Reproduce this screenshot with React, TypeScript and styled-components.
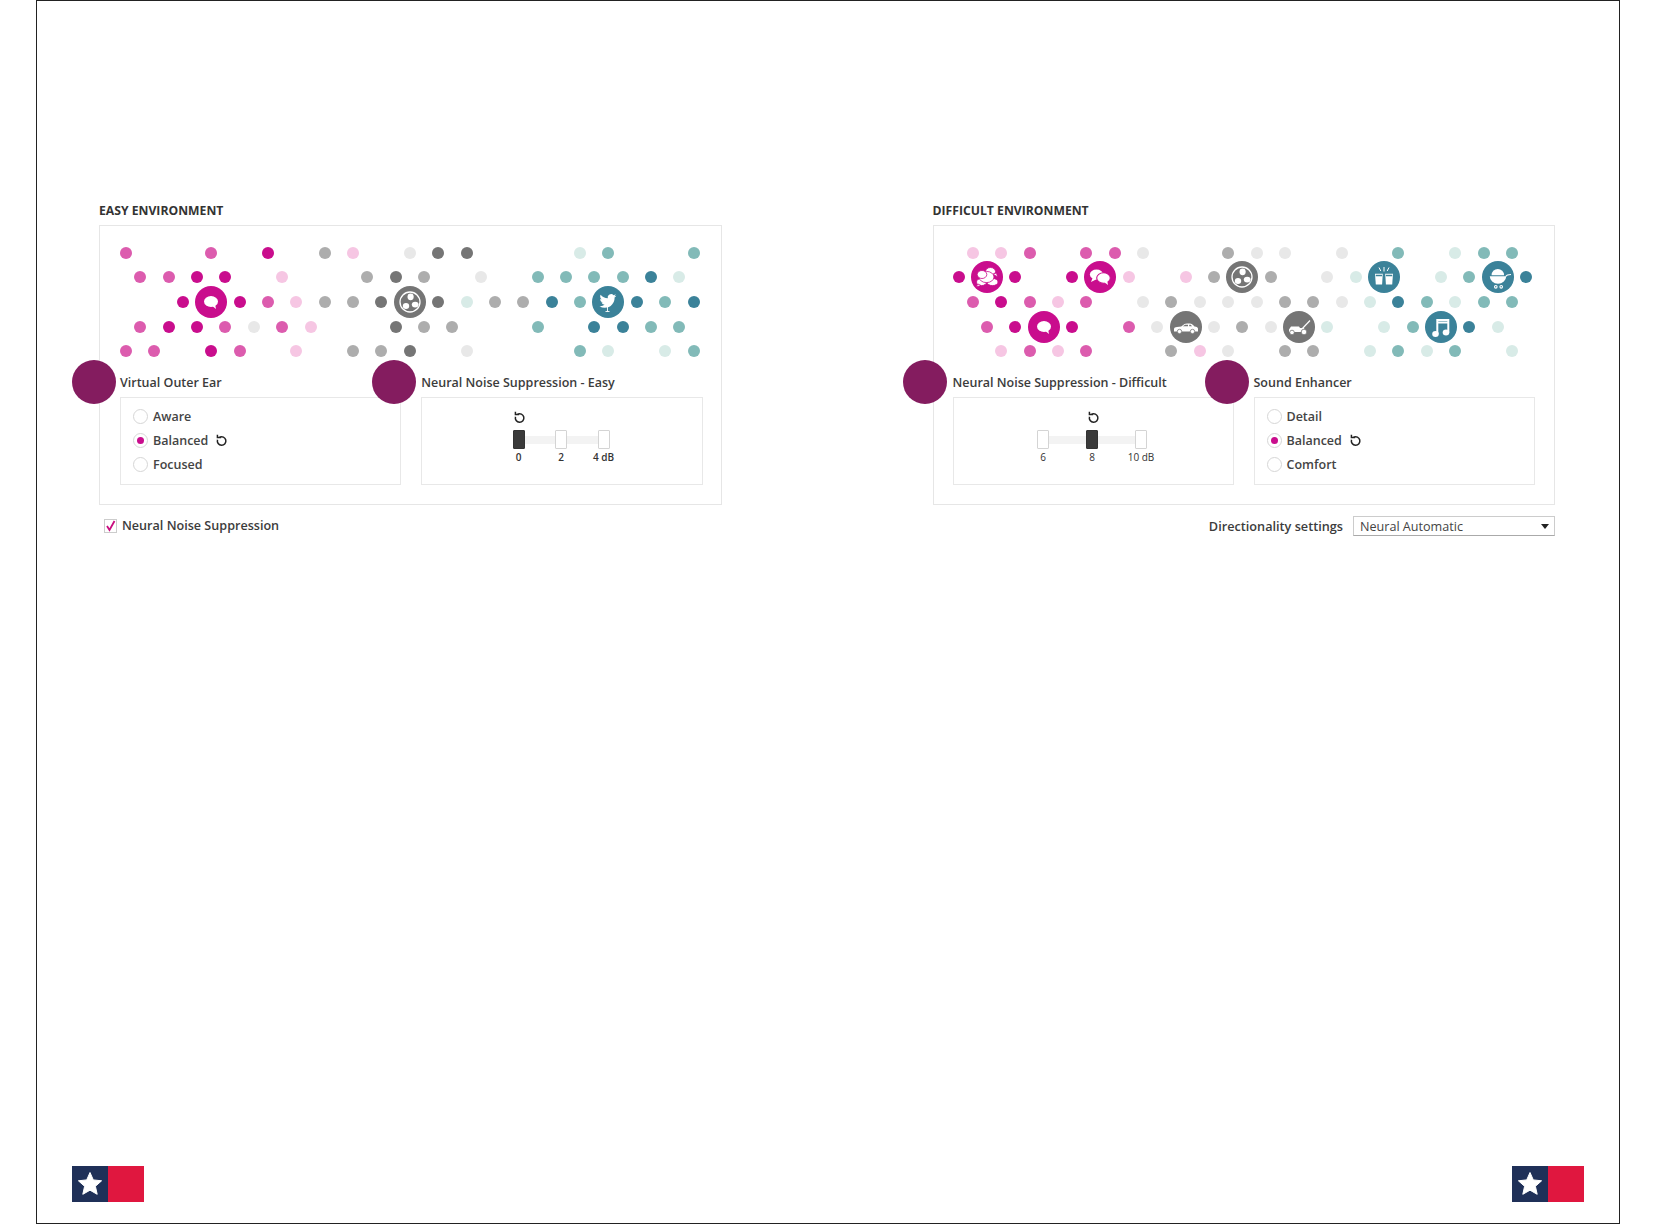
import styled, { createGlobalStyle } from 'styled-components';

const GlobalStyle = createGlobalStyle`
  html, body {
    margin: 0;
    padding: 0;
    background: #fff;
    font-family: 'Open Sans', 'Liberation Sans', sans-serif;
  }
`;

const tones: Record<string, string> = {
  pd: '#c90d8d',
  pm: '#dc5cae',
  pl: '#f6c6e3',
  gd: '#757575',
  gm: '#adadad',
  gl: '#e8e8e8',
  td: '#3b8299',
  tm: '#82bab8',
  tl: '#d8ebe7',
};

// one string per row: family letter, column, tone letter
const easyDots = [
  'p0m p6m p10d g14m p16l g20l g22d g24d t32l t34m t40m',
  'p1m p3m p5d p7d p11l g17m g19d g21m g25l t29m t31m t33m t35m t37d t39l',
  'p4d p8d p10m p12l g14m g16m g18d g22d t24l g26m g28m t30d t32m t36d t38m t40d',
  'p1m p3d p5d p7m g9l p11m p13l g19d g21m g23m t29m t33d t35d t37m t39m',
  'p0m p2m p6d p8m p12l g16m g18m g20d g24l t32m t34l t38l t40m',
];

const difficultDots = [
  'p1l p3l p5m p9m p11m g13l g19m g21l g23l g27l t31m t35l t37m t39m',
  'p0d p4d p8d p12l p16l g18m g22m g26l t28l t34l t36m t40d',
  'p1m p3d p5m p7l p9m g13l g15m g17l g19l g21l g23m g25m g27l t29l t31d t33m t35l t37m t39m',
  'p2m p4d p8d p12m g14l g18l g20m g22l t26l t30l t32m t36d t38l',
  'p3l p5m p7l p9m g15m p17l g19l g23m g25m t29l t31m t33l t35m t39l',
];

type Family = 'p' | 'g' | 't';
const bigColors: Record<Family, string> = { p: '#c90d8d', g: '#757575', t: '#3b8299' };

function SpeechIcon() {
  return (
    <svg width="32" height="32" viewBox="0 0 32 32">
      <ellipse cx="16" cy="15.5" rx="7" ry="5.4" fill="#fff" />
      <path d="M16 19l5 4-1-5z" fill="#fff" />
    </svg>
  );
}

function TwoBubblesIcon() {
  return (
    <svg width="32" height="32" viewBox="0 0 32 32">
      <ellipse cx="12.5" cy="13.5" rx="6.6" ry="5" fill="#fff" />
      <path d="M9 16l-2 5 6-3z" fill="#fff" />
      <ellipse cx="19.5" cy="17" rx="6.8" ry="5.2" fill="#fff" stroke="currentColor" strokeWidth="1.1" />
      <path d="M20 21l4 3-.8-4.5z" fill="#fff" />
    </svg>
  );
}

function CrowdIcon() {
  return (
    <svg width="32" height="32" viewBox="0 0 32 32" stroke="currentColor" strokeWidth="0.8" fill="#fff">
      <ellipse cx="19.5" cy="10.5" rx="5" ry="4" />
      <path d="M22 13l4.500 3-1-4z" />
      <ellipse cx="21.5" cy="21" rx="5.500" ry="3.600" />
      <ellipse cx="10.500" cy="21" rx="5" ry="3.600" />
      <path d="M7 23l-2 3 5-1.500z" />
      <ellipse cx="15.500" cy="16" rx="7.500" ry="5.600" />
      <ellipse cx="11" cy="13.500" rx="4.800" ry="4" />
    </svg>
  );
}

function FanIcon() {
  return (
    <svg width="32" height="32" viewBox="0 0 32 32">
      <circle cx="16" cy="16" r="10" fill="none" stroke="#fff" strokeWidth="1.3" />
      <ellipse cx="16.6" cy="10.8" rx="3.1" ry="3.4" fill="#fff" />
      <ellipse cx="21.2" cy="18.6" rx="3.4" ry="2.9" fill="#fff" />
      <ellipse cx="12" cy="20" rx="3.2" ry="3" fill="#fff" />
    </svg>
  );
}

function CarIcon() {
  return (
    <svg width="32" height="32" viewBox="0 0 32 32">
      <path
        d="M4 20.500v-2.800q0-1.300 3-1.700l4.200-.6 3.300-2.300q.8-.5 2.500-.5h3q2 0 3.300 1.700l1.200 1.300q3.500.4 3.500 2.200v2.700z"
        fill="#fff"
      />
      <path d="M12.800 15.300l2.300-1.600h2.900v1.600zM19.200 13.700h1.500l1.400 1.600h-2.900z" fill="currentColor" />
      <circle cx="9.500" cy="20.500" r="2.200" fill="#fff" stroke="currentColor" strokeWidth="0.8" />
      <circle cx="22.500" cy="20.500" r="2.200" fill="#fff" stroke="currentColor" strokeWidth="0.8" />
    </svg>
  );
}

function MowerIcon() {
  return (
    <svg width="32" height="32" viewBox="0 0 32 32">
      <path d="M18 19L27 9.500" stroke="#fff" strokeWidth="1.2" />
      <path d="M6 18.500l2-3h8l1 1.500h4l1.500 4h-16.500z" fill="#fff" />
      <circle cx="9" cy="21.500" r="2.300" fill="#fff" stroke="currentColor" strokeWidth="0.8" />
      <circle cx="21" cy="21" r="2.800" fill="#fff" stroke="currentColor" strokeWidth="0.8" />
    </svg>
  );
}

function CheersIcon() {
  return (
    <svg width="32" height="32" viewBox="0 0 32 32">
      <path d="M7 12.700h7.800l-.7 10.800H7.800z" fill="#fff" />
      <path d="M25 12.700h-7.800l.7 10.800h6.300z" fill="#fff" />
      <path d="M7.800 14.500h6.300M24.200 14.500h-6.300" stroke="currentColor" strokeWidth="1.300" />
      <path d="M16 6v4.500M11 6.500l1.800 3.500M21 6.500l-1.800 3.500" stroke="#fff" strokeWidth="1" fill="none" />
    </svg>
  );
}

function StrollerIcon() {
  return (
    <svg width="32" height="32" viewBox="0 0 32 32">
      <path d="M9.500 14.300a6.300 6.300 0 0 1 12.600 0z" fill="#fff" />
      <path d="M7.800 15.300h16.400a8.200 7.400 0 0 1-16.400 0z" fill="#fff" />
      <path d="M23.800 15.400q1-1.800 5.200-1.900" stroke="#fff" strokeWidth="1.100" fill="none" />
      <circle cx="13.800" cy="25.800" r="1.300" fill="none" stroke="#fff" strokeWidth="1.100" />
      <circle cx="19.200" cy="25.800" r="1.300" fill="none" stroke="#fff" strokeWidth="1.100" />
    </svg>
  );
}

function MusicIcon() {
  return (
    <svg width="32" height="32" viewBox="0 0 32 32">
      <ellipse cx="10.500" cy="23" rx="3.300" ry="2.900" fill="#fff" />
      <ellipse cx="21" cy="21.500" rx="3.300" ry="2.900" fill="#fff" />
      <path d="M12.300 23V9h11v12.500M12.300 11.500h11" stroke="#fff" strokeWidth="2" fill="none" />
    </svg>
  );
}

function BirdIcon() {
  return (
    <svg width="32" height="32" viewBox="0 0 32 32">
      <g transform="translate(7.500 6.500) scale(.7)">
        <path
          fill="#fff"
          d="M23.953 4.570a10 10 0 01-2.825.775 4.958 4.958 0 002.163-2.723c-.951.555-2.005.959-3.127 1.184a4.920 4.920 0 00-8.384 4.482C7.690 8.095 4.067 6.130 1.640 3.162a4.822 4.822 0 00-.666 2.475c0 1.710.870 3.213 2.188 4.096a4.904 4.904 0 01-2.228-.616v.060a4.923 4.923 0 003.946 4.827 4.996 4.996 0 01-2.212.085 4.936 4.936 0 004.604 3.417 9.867 9.867 0 01-6.102 2.105c-.390 0-.779-.023-1.170-.067a13.995 13.995 0 007.557 2.209c9.053 0 13.998-7.496 13.998-13.985 0-.210 0-.420-.015-.630A9.935 9.935 0 0024 4.590z"
        />
      </g>
      <path d="M15.500 21v4.500M13.500 25.500h4" stroke="#fff" strokeWidth="0.9" />
    </svg>
  );
}

type BigItem = { row: number; col: number; family: Family; icon: React.ReactNode };

const easyBig: BigItem[] = [
  { row: 2, col: 6, family: 'p', icon: <SpeechIcon /> },
  { row: 2, col: 20, family: 'g', icon: <FanIcon /> },
  { row: 2, col: 34, family: 't', icon: <BirdIcon /> },
];

const difficultBig: BigItem[] = [
  { row: 1, col: 2, family: 'p', icon: <CrowdIcon /> },
  { row: 1, col: 10, family: 'p', icon: <TwoBubblesIcon /> },
  { row: 3, col: 6, family: 'p', icon: <SpeechIcon /> },
  { row: 1, col: 20, family: 'g', icon: <FanIcon /> },
  { row: 3, col: 16, family: 'g', icon: <CarIcon /> },
  { row: 3, col: 24, family: 'g', icon: <MowerIcon /> },
  { row: 1, col: 30, family: 't', icon: <CheersIcon /> },
  { row: 1, col: 38, family: 't', icon: <StrollerIcon /> },
  { row: 3, col: 34, family: 't', icon: <MusicIcon /> },
];

function DotField({ rows, big }: { rows: string[]; big: BigItem[] }) {
  return (
    <DotGrid>
      {rows.map((line, row) =>
        line.split(' ').map((token) => {
          const col = parseInt(token.slice(1), 10);
          const color = tones[token[0] + token[token.length - 1]];
          return <Dot key={`${row}-${token}`} $row={row} $col={col} $color={color} />;
        }),
      )}
      {big.map((item) => (
        <BigDot key={`${item.row}-${item.col}`} $row={item.row} $col={item.col} $color={bigColors[item.family]}>
          {item.icon}
        </BigDot>
      ))}
    </DotGrid>
  );
}

function ResetIcon() {
  return (
    <ResetSvg viewBox="0 0 14 14">
      <path d="M5 3.400a4.600 4.600 0 1 1-2.300 2.800" />
      <path d="M2.600.800v3h4" />
    </ResetSvg>
  );
}

function RadioList({ items, active }: { items: string[]; active: string }) {
  return (
    <RadioBox>
      {items.map((item) => (
        <RadioRow key={item}>
          <Radio $on={item === active} />
          <RadioLabel>{item}</RadioLabel>
          {item === active && <ResetIcon />}
        </RadioRow>
      ))}
    </RadioBox>
  );
}

function Slider({
  stops,
  active,
  left,
  step,
  light,
}: {
  stops: string[];
  active: number;
  left: number;
  step: number;
  light?: boolean;
}) {
  return (
    <SliderBox>
      <SliderStops $left={left} $step={step}>
        <SliderTrack $step={step} />
        {stops.map((label, i) => (
          <Stop key={label}>
            <ResetSlot>{i === active && <ResetIcon />}</ResetSlot>
            <Handle $on={i === active} />
            <StopLabel $light={light}>{label}</StopLabel>
          </Stop>
        ))}
      </SliderStops>
    </SliderBox>
  );
}

function Logo() {
  return (
    <LogoWrap>
      <LogoBlue>
        <svg width="36" height="36" viewBox="0 0 36 36">
          <polygon
            points="18,6.500 21.300,13.900 29.600,14.800 23.400,20.300 25.200,28.300 18,24.200 10.800,28.300 12.600,20.300 6.400,14.800 14.700,13.900"
            fill="#fff"
            stroke="#fff"
            strokeWidth="1"
            strokeLinejoin="round"
          />
        </svg>
      </LogoBlue>
      <LogoRed />
    </LogoWrap>
  );
}

export default function App() {
  return (
    <Page>
      <GlobalStyle />
      <Columns>
        <Column $width={623}>
          <Heading>EASY ENVIRONMENT</Heading>
          <Panel $left={20} $right={18.5}>
            <DotField rows={easyDots} big={easyBig} />
            <Blocks>
              <Block>
                <BlockTitle>
                  <Badge $center={-26} />
                  Virtual Outer Ear
                </BlockTitle>
                <RadioList items={['Aware', 'Balanced', 'Focused']} active="Balanced" />
              </Block>
              <Block>
                <BlockTitle>
                  <Badge $center={-27} />
                  Neural Noise Suppression - Easy
                </BlockTitle>
                <Slider stops={['0', '2', '4 dB']} active={0} left={75} step={42.5} />
              </Block>
            </Blocks>
          </Panel>
          <UnderRow>
            <CheckBox>
              <svg width="11" height="12" viewBox="0 0 11 12">
                <path d="M2 6l2.500 4L9.500 1" fill="none" stroke="#c90d7f" strokeWidth="1.800" />
              </svg>
            </CheckBox>
            <UnderLabel>Neural Noise Suppression</UnderLabel>
          </UnderRow>
        </Column>

        <Column $width={622.5}>
          <Heading>DIFFICULT ENVIRONMENT</Heading>
          <Panel $left={19} $right={19.5}>
            <DotField rows={difficultDots} big={difficultBig} />
            <Blocks>
              <Block>
                <BlockTitle>
                  <Badge $center={-28} />
                  Neural Noise Suppression - Difficult
                </BlockTitle>
                <Slider stops={['6', '8', '10 dB']} active={1} left={65} step={49} light />
              </Block>
              <Block>
                <BlockTitle>
                  <Badge $center={-27} />
                  Sound Enhancer
                </BlockTitle>
                <RadioList items={['Detail', 'Balanced', 'Comfort']} active="Balanced" />
              </Block>
            </Blocks>
          </Panel>
          <DirectionRow>
            <DirectionLabel>Directionality settings</DirectionLabel>
            <SelectBox>
              Neural Automatic
              <SelectArrow />
            </SelectBox>
          </DirectionRow>
        </Column>
      </Columns>
      <Footer>
        <Logo />
        <Logo />
      </Footer>
    </Page>
  );
}

const Page = styled.div`
  box-sizing: border-box;
  display: flex;
  flex-direction: column;
  justify-content: space-between;
  width: 1584px;
  height: 1224px;
  margin-left: 36px;
  padding: 201px 35px 21px;
  border: 1.5px solid #222;
`;

const Columns = styled.div`
  display: flex;
  gap: 210.5px;
  padding-left: 27px;
`;

const Column = styled.section<{ $width: number }>`
  width: ${(p) => p.$width}px;
`;

const Heading = styled.h2`
  margin: 0 0 6px;
  height: 17px;
  font-size: 12.2px;
  line-height: 17px;
  font-weight: 700;
  color: #333;
`;

const Panel = styled.div<{ $left: number; $right: number }>`
  box-sizing: border-box;
  height: 279.5px;
  padding: 14.5px ${(p) => p.$right}px 0 ${(p) => p.$left}px;
  border: 1px solid #e6e6e6;
`;

const DotGrid = styled.div`
  display: grid;
  grid-template-columns: repeat(41, 14.2px);
  grid-template-rows: repeat(5, 24.67px);
  margin-left: -1px;
`;

const Dot = styled.span<{ $row: number; $col: number; $color: string }>`
  grid-row: ${(p) => p.$row + 1};
  grid-column: ${(p) => p.$col + 1};
  place-self: center;
  width: 12px;
  height: 12px;
  border-radius: 50%;
  background: ${(p) => p.$color};
`;

const BigDot = styled.span<{ $row: number; $col: number; $color: string }>`
  grid-row: ${(p) => p.$row + 1};
  grid-column: ${(p) => p.$col + 1};
  place-self: center;
  display: flex;
  width: 32px;
  height: 32px;
  border-radius: 50%;
  color: ${(p) => p.$color};
  background: ${(p) => p.$color};
`;

const Blocks = styled.div`
  display: flex;
  gap: 20px;
  margin-top: 10.5px;
`;

const Block = styled.div`
  flex: 1;
`;

const BlockTitle = styled.h3`
  position: relative;
  margin: 0 0 5px;
  height: 18px;
  font-size: 12.5px;
  line-height: 18px;
  font-weight: 600;
  color: #3c3c3c;
`;

const Badge = styled.span<{ $center: number }>`
  position: absolute;
  left: ${(p) => p.$center - 22}px;
  top: -14.5px;
  width: 44px;
  height: 44px;
  border-radius: 50%;
  background: #841c5f;
`;

const RadioBox = styled.div`
  box-sizing: border-box;
  height: 87.5px;
  padding: 6px 12px;
  border: 1px solid #e8e8e8;
`;

const RadioRow = styled.div`
  display: flex;
  align-items: center;
  gap: 5px;
  height: 24px;
`;

const Radio = styled.span<{ $on: boolean }>`
  box-sizing: border-box;
  display: flex;
  align-items: center;
  justify-content: center;
  width: 15px;
  height: 15px;
  border: 1px solid #d6d6d6;
  border-radius: 50%;

  &::after {
    content: '';
    display: ${(p) => (p.$on ? 'block' : 'none')};
    width: 7px;
    height: 7px;
    border-radius: 50%;
    background: #c90d8d;
  }
`;

const RadioLabel = styled.span`
  font-size: 12.5px;
  font-weight: 600;
  color: #444;
`;

const ResetSvg = styled.svg`
  width: 13px;
  height: 13px;
  margin-left: 2px;
  fill: none;
  stroke: #222;
  stroke-width: 1.6;
`;

const SliderBox = styled.div`
  box-sizing: border-box;
  height: 87.5px;
  padding-top: 13px;
  border: 1px solid #e8e8e8;
`;

const SliderStops = styled.div<{ $left: number; $step: number }>`
  position: relative;
  display: grid;
  grid-template-columns: repeat(3, ${(p) => p.$step}px);
  margin-left: ${(p) => p.$left}px;
`;

const SliderTrack = styled.span<{ $step: number }>`
  position: absolute;
  left: ${(p) => p.$step / 2}px;
  top: 25px;
  width: ${(p) => p.$step * 2}px;
  height: 8px;
  background: #f3f3f3;
`;

const Stop = styled.div`
  position: relative;
  display: flex;
  flex-direction: column;
  align-items: center;
`;

const ResetSlot = styled.div`
  display: flex;
  justify-content: center;
  height: 14px;
  margin-bottom: 5px;
`;

const Handle = styled.span<{ $on: boolean }>`
  box-sizing: border-box;
  width: 12px;
  height: 19px;
  border: 1px solid ${(p) => (p.$on ? '#333' : '#d4d4d4')};
  border-radius: 1px;
  background: ${(p) => (p.$on ? '#3a3a3a' : '#fff')};
`;

const StopLabel = styled.span<{ $light?: boolean }>`
  margin-top: 1px;
  font-size: 10px;
  line-height: 14px;
  font-weight: ${(p) => (p.$light ? 500 : 600)};
  color: #333;
  white-space: nowrap;
`;

const UnderRow = styled.div`
  display: flex;
  align-items: center;
  gap: 5px;
  height: 20px;
  margin: 11px 0 0 5px;
`;

const CheckBox = styled.span`
  box-sizing: border-box;
  display: flex;
  align-items: center;
  justify-content: center;
  width: 13px;
  height: 14px;
  border: 1px solid #ccc;
`;

const UnderLabel = styled.span`
  font-size: 12.6px;
  font-weight: 600;
  color: #3c3c3c;
`;

const DirectionLabel = styled(UnderLabel)`
  font-size: 12.7px;
`;

const DirectionRow = styled.div`
  display: flex;
  align-items: center;
  justify-content: flex-end;
  gap: 10px;
  margin-top: 11px;
`;

const SelectBox = styled.div`
  box-sizing: border-box;
  position: relative;
  width: 202px;
  height: 20px;
  padding-left: 6px;
  border: 1px solid #ccc;
  border-bottom-color: #aaa;
  font-size: 12.6px;
  line-height: 20px;
  color: #444;
`;

const SelectArrow = styled.span`
  position: absolute;
  right: 5px;
  top: 7px;
  border-left: 4px solid transparent;
  border-right: 4px solid transparent;
  border-top: 5px solid #222;
`;

const Footer = styled.footer`
  display: flex;
  justify-content: space-between;
`;

const LogoWrap = styled.div`
  display: flex;
  width: 72px;
  height: 36px;
`;

const LogoBlue = styled.div`
  width: 36px;
  height: 36px;
  background: #1f3058;
`;

const LogoRed = styled.div`
  width: 36px;
  height: 36px;
  background: #e0173f;
`;
